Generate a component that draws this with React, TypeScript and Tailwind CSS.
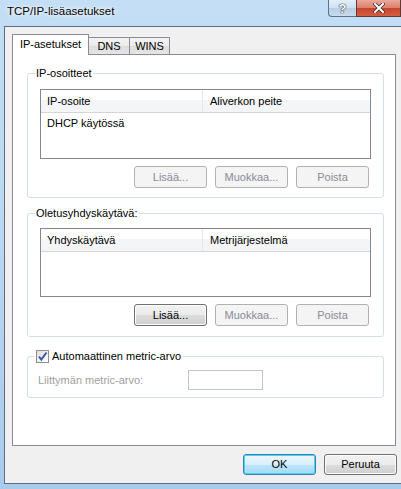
import type { ReactNode } from "react";

const btnNormal =
  "flex items-center justify-center rounded-[3px] border border-[#707070] bg-[linear-gradient(#f2f2f2_0%,#ebebeb_50%,#dddddd_50%,#cfcfcf_100%)] shadow-[inset_0_0_0_1px_#fcfcfc] text-black";
const btnDisabled =
  "flex items-center justify-center rounded-[3px] border border-[#adb2b5] bg-[#f4f4f4] text-[#8a8a96]";

function Button({ label, disabled, def }: { label: string; disabled?: boolean; def?: boolean }) {
  if (def) {
    return (
      <div className="flex h-[21px] w-[73px] items-center justify-center rounded-[3px] border border-[#3c7fb1] bg-[linear-gradient(#eaf6fd_0%,#d9f0fc_50%,#bee6fd_50%,#a7d9f5_100%)] shadow-[inset_0_0_0_1px_#48d5fb] text-black">
        {label}
      </div>
    );
  }
  return <div className={`h-[22px] w-[73px] ${disabled ? btnDisabled : btnNormal}`}>{label}</div>;
}

function ListBox({ cols, rows, h }: { cols: [string, string]; rows: string[]; h: string }) {
  return (
    <div className={`ml-[12px] w-[331px] border border-[#828790] bg-white ${h}`}>
      <div className="flex h-[23px] border-b border-[#d5d5d5] bg-[linear-gradient(#ffffff_0%,#ffffff_45%,#f4f5f7_45%,#f4f5f7_100%)] leading-[22px]">
        <div className="w-[162px] border-r border-[#e3e8ee] pl-[6px]">{cols[0]}</div>
        <div className="pl-[7px]">{cols[1]}</div>
      </div>
      {rows.map((r) => (
        <div key={r} className="h-[20px] pl-[6px] leading-[20px]">
          {r}
        </div>
      ))}
    </div>
  );
}

function Group({ label, className, children }: { label: ReactNode; className: string; children: ReactNode }) {
  return (
    <div className={`ml-[14px] w-[357px] rounded-[3px] border border-[#d5dfe5] ${className}`}>
      <div className="-mt-[9px] ml-[7px] flex h-[16px] w-fit items-center bg-white px-[1px] leading-[16px]">
        {label}
      </div>
      {children}
    </div>
  );
}

export default function App() {
  return (
    <div className="flex h-[489px] w-[401px] flex-col overflow-hidden bg-[linear-gradient(180deg,#c3def5_0%,#bcd9f2_40%,#a9cbeb_100%)] font-['Liberation_Sans',Arial,sans-serif] text-[11px] text-black">
      {/* title bar */}
      <div className="flex h-[26px] items-start">
        <div className="pl-[7px] pt-[3px] text-[11.5px] leading-[16px] [text-shadow:0_0_6px_#ffffff,0_0_3px_#ffffff]">
          TCP/IP-lisäasetukset
        </div>
        <div className="ml-auto flex">
          <div className="flex h-[17px] w-[28px] items-center justify-center rounded-bl-[4px] border border-t-0 border-r-0 border-[#5f7288] bg-[linear-gradient(#e3eef9_0%,#cfe0f1_50%,#b7cde4_50%,#c9dcef_100%)] text-[13px] font-bold leading-none text-white [text-shadow:0_0_1px_#333,0_0_1px_#333,0_0_1px_#333]">
            ?
          </div>
          <div className="flex h-[17px] w-[45px] items-center justify-center border border-t-0 border-[#5f3a36] bg-[linear-gradient(#e9a99b_0%,#dc7e6b_50%,#c7432b_50%,#d35f43_100%)]">
            <svg width="12" height="10" viewBox="0 0 12 10">
              <path d="M2 1 L10 9 M10 1 L2 9" stroke="#3a2a2a" strokeWidth="3.5" strokeLinecap="square" />
              <path d="M2 1 L10 9 M10 1 L2 9" stroke="#ffffff" strokeWidth="2" strokeLinecap="square" />
            </svg>
          </div>
        </div>
      </div>

      {/* client area */}
      <div className="ml-[4px] h-[458px] w-[420px] border-y border-l border-[#5d6e80] bg-[#f0f0f0] pl-[7px] pt-[7px]">
        {/* tabs */}
        <div className="flex h-[20px] items-end">
          <div className="relative z-10 -mb-px flex h-[21px] w-[77px] items-center justify-center border-x border-t border-[#898c95] bg-white pb-[1px]">
            IP-asetukset
          </div>
          <div className="flex h-[17px] w-[41px] items-center justify-center border-r border-t border-[#898c95] bg-[linear-gradient(#f3f3f3_0%,#ebebeb_50%,#dddddd_50%,#e5e5e5_100%)] pt-[1px]">
            DNS
          </div>
          <div className="flex h-[17px] w-[40px] items-center justify-center border-r border-t border-[#898c95] bg-[linear-gradient(#f3f3f3_0%,#ebebeb_50%,#dddddd_50%,#e5e5e5_100%)] pt-[1px]">
            WINS
          </div>
        </div>

        {/* tab panel */}
        <div className="h-[392px] w-[384px] border border-[#898c95] bg-white pt-[18px]">
          <Group label="IP-osoitteet" className="pb-[9px]">
            <div className="mt-[8px]">
              <ListBox cols={["IP-osoite", "Aliverkon peite"]} rows={["DHCP käytössä"]} h="h-[70px]" />
            </div>
            <div className="mt-[7px] flex justify-end gap-[8px] pr-[14px]">
              <Button label="Lisää..." disabled />
              <Button label="Muokkaa..." disabled />
              <Button label="Poista" disabled />
            </div>
          </Group>

          <Group label="Oletusyhdyskäytävä:" className="mt-[15px] pb-[10px]">
            <div className="mt-[7px]">
              <ListBox cols={["Yhdyskäytävä", "Metrijärjestelmä"]} rows={[]} h="h-[69px]" />
            </div>
            <div className="mt-[7px] flex justify-end gap-[8px] pr-[14px]">
              <Button label="Lisää..." />
              <Button label="Muokkaa..." disabled />
              <Button label="Poista" disabled />
            </div>
          </Group>

          <Group
            className="mt-[19px] pb-[7px]"
            label={
              <div className="flex items-center gap-[3px]">
                <div className="flex h-[13px] w-[13px] items-center justify-center border border-[#8e8f8f] bg-[linear-gradient(135deg,#dcdcdc,#ffffff)]">
                  <svg width="11" height="11" viewBox="0 0 11 11">
                    <path d="M2 5.5 L4.3 8.5 L9.5 1.5" fill="none" stroke="#3c5aa0" strokeWidth="2" />
                  </svg>
                </div>
                <span className="pr-[1px]">Automaattinen metric-arvo</span>
              </div>
            }
          >
            <div className="mt-[6px] flex h-[20px] items-center">
              <div className="w-[160px] pl-[10px] text-[#a0a0a0]">Liittymän metric-arvo:</div>
              <div className="h-[20px] w-[75px] border border-[#c6c6c6] bg-white" />
            </div>
          </Group>
        </div>

        {/* dialog buttons */}
        <div className="mt-[8px] flex w-[385px] justify-end gap-[8px]">
          <Button label="OK" def />
          <div className="flex h-[21px] w-[73px] items-center justify-center rounded-[3px] border border-[#707070] bg-[linear-gradient(#f2f2f2_0%,#ebebeb_50%,#dddddd_50%,#cfcfcf_100%)] shadow-[inset_0_0_0_1px_#fcfcfc]">
            Peruuta
          </div>
        </div>
      </div>
    </div>
  );
}
